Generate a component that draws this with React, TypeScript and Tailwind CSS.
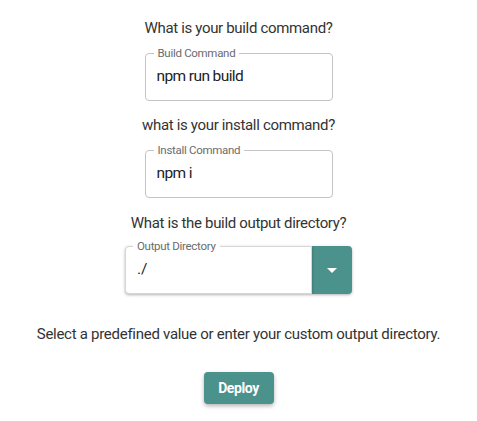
import React from "react";

const font = { fontFamily: "Roboto, 'Liberation Sans', sans-serif" };

type FieldProps = { label: string; value: string };

const OutlinedField = ({ label, value }: FieldProps) => (
  <div className="relative h-[48px] w-[188px] rounded border border-[#c4c4c4] bg-white">
    <span className="absolute -top-[8px] left-[8px] bg-white px-[4px] text-[11.5px] leading-[14px] tracking-[-0.3px] text-[#6b6b6b]">
      {label}
    </span>
    <div className="flex h-full items-center pl-[11px] text-[15.5px] tracking-[-0.6px] text-[#222]">
      {value}
    </div>
  </div>
);

export default function App() {
  return (
    <div
      className="flex min-h-[421px] w-full flex-col items-center bg-white pt-[18px] text-[#333]"
      style={font}
    >
      <p className="text-[15px] leading-5 tracking-[-0.33px]">What is your build command?</p>
      <div className="mt-[15px]">
        <OutlinedField label="Build Command" value="npm run build" />
      </div>

      <p className="mt-[14px] text-[15px] leading-5 tracking-[-0.33px]">what is your install command?</p>
      <div className="mt-[15px]">
        <OutlinedField label="Install Command" value="npm i" />
      </div>

      <p className="mt-[15px] text-[15px] leading-5 tracking-[-0.33px]">What is the build output directory?</p>
      <div className="mt-[13px] flex h-[48px] w-[227px]">
        <div className="relative flex-1 rounded-l border border-[#d6d6d6] bg-white shadow-[0_1px_3px_rgba(0,0,0,0.3)]">
          <span className="absolute -top-[8px] left-[7px] bg-white px-[4px] text-[11.5px] leading-[14px] tracking-[-0.3px] text-[#6b6b6b]">
            Output Directory
          </span>
          <div className="flex h-full items-center pl-[11px] text-[15.5px] text-[#222]">./</div>
        </div>
        <button
          type="button"
          className="flex w-[40px] items-center justify-center rounded-r bg-[#4b918c] shadow-[0_1px_3px_rgba(0,0,0,0.3)]"
        >
          <svg width="10" height="5" viewBox="0 0 10 5">
            <path d="M0 0 L5 5 L10 0 Z" fill="white" />
          </svg>
        </button>
      </div>

      <p className="mt-[30px] text-[15px] leading-5 tracking-[-0.28px]">
        Select a predefined value or enter your custom output directory.
      </p>

      <button
        type="button"
        className="mt-[28px] h-[32px] w-[70px] rounded bg-[#4b918c] text-[14px] font-bold tracking-[-0.4px] text-white shadow-[0_2px_4px_rgba(0,0,0,0.3)]"
      >
        Deploy
      </button>
    </div>
  );
}
